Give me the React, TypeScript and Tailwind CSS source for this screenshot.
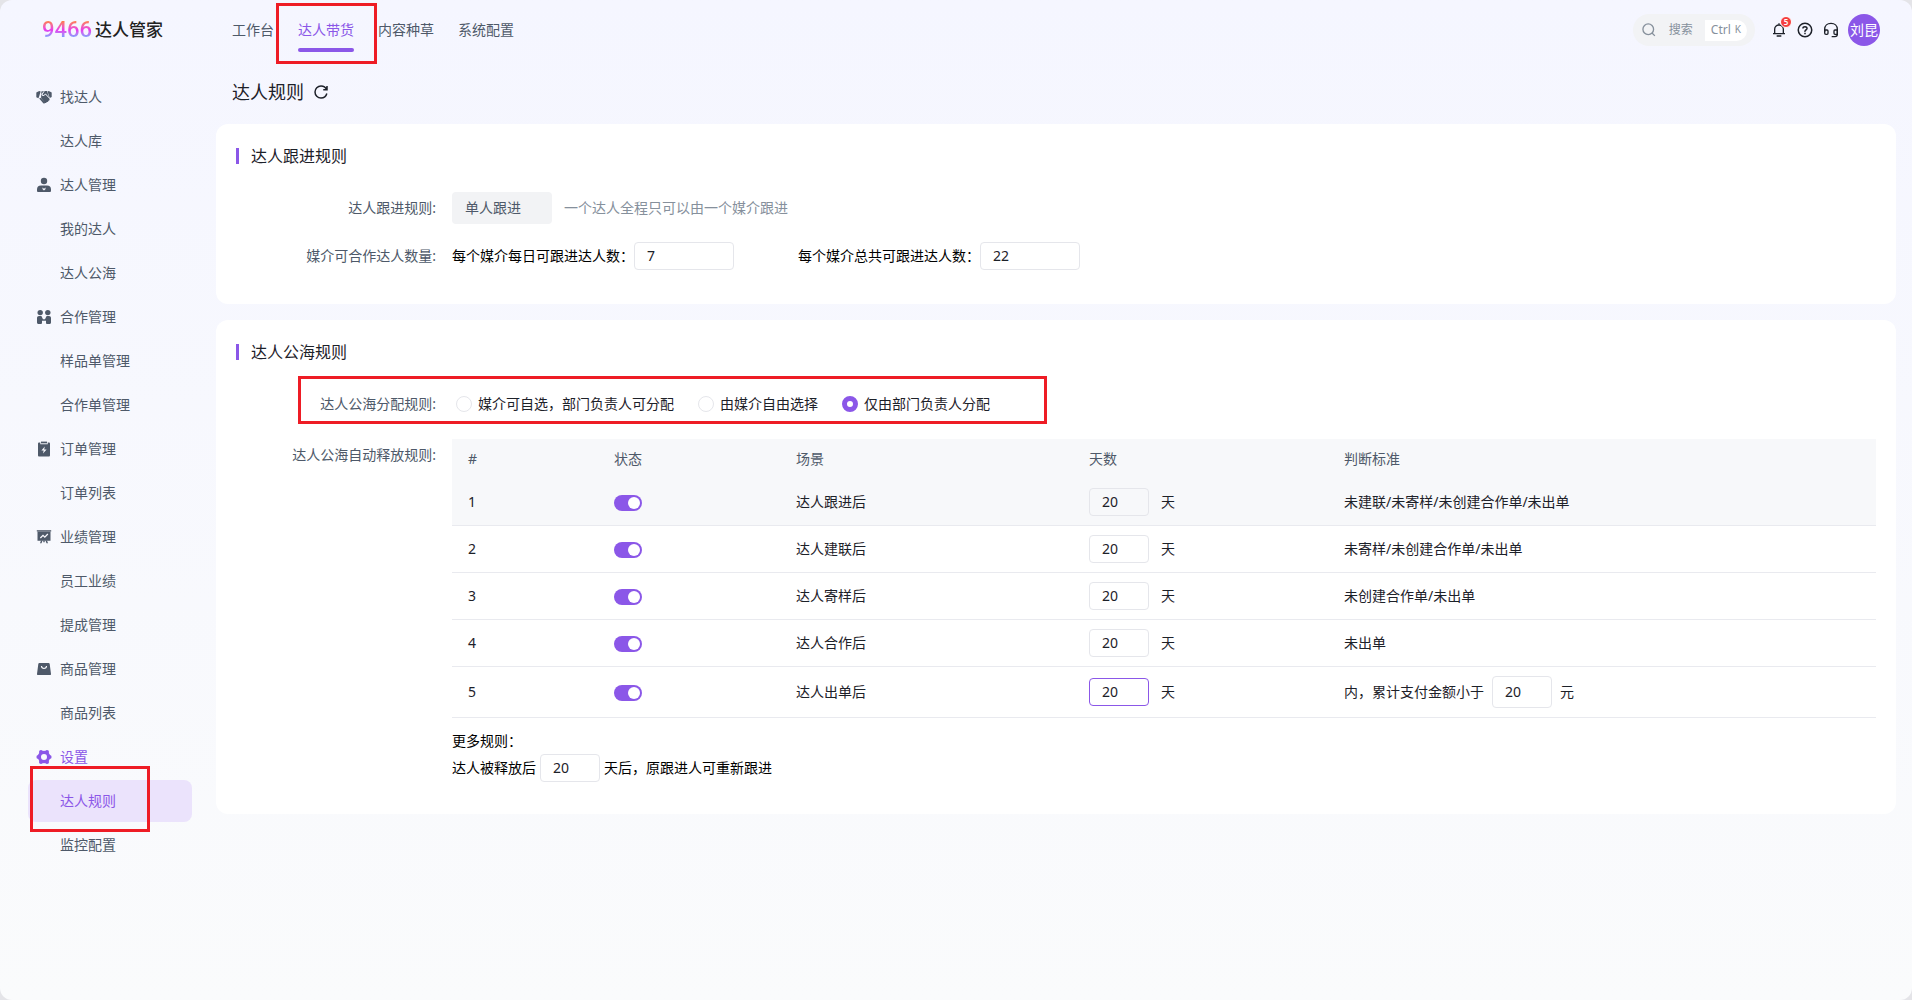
import { useState, type ReactNode } from 'react'
import clsx from 'clsx'

function StrokeIcon({ size, width = 4, children }: { size: number; width?: number; children: ReactNode }) {
  return (
    <svg width={size} height={size} viewBox="0 0 48 48" fill="none" stroke="currentColor" strokeWidth={width} aria-hidden="true">
      {children}
    </svg>
  )
}

function SolidIcon({ children }: { children: ReactNode }) {
  return (
    <svg width="16" height="16" viewBox="0 0 16 16" fill="currentColor" aria-hidden="true">
      {children}
    </svg>
  )
}

const HandshakeIcon = () => (
  <SolidIcon>
    <path d="M.3 3.400 3.200 1.900l1.500.7L2.500 9.300.3 8.200Z" />
    <path d="M15.700 3.400 12.800 1.900l-1.300.6 2.300 6.500 1.900-.9Z" />
    <path d="M5.300 2.500 8 2.100 5.900 4.500c-.6.8-.3 1.800.5 2.200.8.400 1.700.2 2.300-.5l.7-.7 3.900 4.100c.5.6.4 1.400-.1 1.800-.2.200-.5.300-.8.300 0 .9-.7 1.500-1.600 1.400-.2.800-1 1.200-1.700.9L5.100 9.300Z" />
    <path d="M8.700 2.100h2.300l2.100 6.100-3.300-3.400c-.3-.2-.6-.1-.8.1L7.700 5.900c-.4.300-.9.100-1-.2-.1-.2 0-.4.100-.6Z" />
    <path d="M3.200 9.600 4.400 8.700l5 5.100c-.5.700-1.400.9-2.100.4Z" />
  </SolidIcon>
)

const UserIcon = () => (
  <SolidIcon>
    <circle cx="8" cy="4" r="3.200" />
    <path fillRule="evenodd" d="M5 8.400h6a4 4 0 0 1 4 4v1.600a1 1 0 0 1-1 1H2a1 1 0 0 1-1-1v-1.600a4 4 0 0 1 4-4Zm1.400 2 .2 1.800L8 13.600l1.400-1.400.2-1.800L8 11.800Z" />
  </SolidIcon>
)

const TeamIcon = () => (
  <SolidIcon>
    <circle cx="4.200" cy="3.600" r="2.700" />
    <circle cx="11.800" cy="3.600" r="2.700" />
    <path d="M3 7h2.400L7 10.200h2L10.600 7H13c1.200 0 2 .8 2 2v4.500c0 .9-.6 1.500-1.500 1.500h-2.200c-.8 0-1.300-.5-1.300-1.300v-1.900H6v1.900c0 .8-.5 1.300-1.300 1.300H2.500C1.600 15 1 14.400 1 13.500V9c0-1.200.8-2 2-2Z" />
  </SolidIcon>
)

const OrderIcon = () => (
  <SolidIcon>
    <path d="M5 .6h6v1.700H5z" />
    <path fillRule="evenodd" d="M3.300 1.500h1v1.800h7.400V1.500h1c.8 0 1.300.5 1.300 1.300v11.400c0 .8-.5 1.300-1.300 1.300H3.300c-.8 0-1.300-.5-1.300-1.300V2.800c0-.8.500-1.300 1.300-1.300ZM8.800 5.600 5.400 9.500h2.300l-.7 3.100 3.600-4.100H8.200l.6-2.900Z" />
  </SolidIcon>
)

const BoardIcon = () => (
  <SolidIcon>
    <path d="M.8 1.200h14.400v1.300H.8z" />
    <path fillRule="evenodd" d="M1.500 2.500h13v9.300h-13Zm2.400 5.900.9 1 2.200-2.100L8.800 9l3.500-3.500-.9-.9-2.600 2.600L7 5.500Z" />
    <path d="m5 11.500-1 2.700h1.500l1-2.700Zm6 0 1 2.700h-1.500l-1-2.700ZM7.300 11.500h1.400v1.700H7.300Z" />
  </SolidIcon>
)

const BagIcon = () => (
  <SolidIcon>
    <path fillRule="evenodd" d="M3.400 2h9.200c.6 0 1 .4 1.100 1L15 13c.1.600-.4 1.100-1 1.100H2c-.6 0-1.100-.5-1-1.100L2.300 3c.1-.6.500-1 1.100-1Zm1.500 3c0 1.900 1.300 3 3.100 3s3.100-1.100 3.100-3H9.900c0 1.200-.7 1.800-1.900 1.800S6.100 6.200 6.100 5Z" />
  </SolidIcon>
)

const GearIcon = () => (
  <svg width="16" height="16" viewBox="0 0 16 16" aria-hidden="true">
    <circle cx="8" cy="8" r="4.600" fill="none" stroke="currentColor" strokeWidth="3.200" />
    <g fill="currentColor">
      <circle cx="5" cy="2.900" r="2" />
      <circle cx="11" cy="2.900" r="2" />
      <circle cx="2.400" cy="8" r="2" />
      <circle cx="13.600" cy="8" r="2" />
      <circle cx="5" cy="13.100" r="2" />
      <circle cx="11" cy="13.100" r="2" />
    </g>
  </svg>
)

const topNav = ['工作台', '达人带货', '内容种草', '系统配置']

const menu: { label: string; icon?: ReactNode }[] = [
  { label: '找达人', icon: <HandshakeIcon /> },
  { label: '达人库' },
  { label: '达人管理', icon: <UserIcon /> },
  { label: '我的达人' },
  { label: '达人公海' },
  { label: '合作管理', icon: <TeamIcon /> },
  { label: '样品单管理' },
  { label: '合作单管理' },
  { label: '订单管理', icon: <OrderIcon /> },
  { label: '订单列表' },
  { label: '业绩管理', icon: <BoardIcon /> },
  { label: '员工业绩' },
  { label: '提成管理' },
  { label: '商品管理', icon: <BagIcon /> },
  { label: '商品列表' },
  { label: '设置', icon: <GearIcon /> },
  { label: '达人规则' },
  { label: '监控配置' },
]

const assignOptions = ['媒介可自选，部门负责人可分配', '由媒介自由选择', '仅由部门负责人分配']

const releaseRules = [
  { scene: '达人跟进后', rule: '未建联/未寄样/未创建合作单/未出单' },
  { scene: '达人建联后', rule: '未寄样/未创建合作单/未出单' },
  { scene: '达人寄样后', rule: '未创建合作单/未出单' },
  { scene: '达人合作后', rule: '未出单' },
  { scene: '达人出单后', rule: '' },
]

function Field({ id, value, className, label }: { id?: string; value: string; className?: string; label?: string }) {
  return (
    <input
      id={id}
      type="text"
      defaultValue={value}
      aria-label={label}
      className={clsx('rounded border bg-transparent px-3 pb-0.5 text-[#1d2129] outline-none', className)}
    />
  )
}

function Switch({ label }: { label: string }) {
  const [on, setOn] = useState(true)
  return (
    <button
      type="button"
      role="switch"
      aria-checked={on}
      aria-label={label}
      onClick={() => setOn(!on)}
      className={clsx('flex h-4 w-7 items-center rounded-full px-0.5', on ? 'justify-end bg-[#8b57e8]' : 'bg-[#c9cdd4]')}
    >
      <span className="size-3 rounded-full bg-white" />
    </button>
  )
}

function CardTitle({ children }: { children: ReactNode }) {
  return (
    <h2 className="flex h-6 items-center gap-3 text-base text-[#1d2129]">
      <span className="h-4 w-[3px] bg-[#8b57e8]" />
      {children}
    </h2>
  )
}

function Header() {
  return (
    <header className="flex h-[60px] items-center pr-8">
      <a href="#" className="flex w-[232px] shrink-0 items-center gap-[3px] pl-[42px] leading-6">
        <span className="bg-linear-to-b from-[#ff7a50] from-15% via-[#e835ee] via-50% to-[#4fa6ff] to-85% bg-clip-text font-[Roboto,sans-serif] text-[22px] font-medium text-transparent">
          9466
        </span>
        <span className="text-[17px] font-medium text-[#222]">达人管家</span>
      </a>
      <nav className="flex h-full gap-6">
        {topNav.map((item) => {
          const active = item === '达人带货'
          return (
            <a key={item} href="#" className={clsx('relative flex items-center', active ? 'text-[#8b57e8]' : 'text-[#4e5969]')}>
              {item}
              {active && (
                <>
                  <span className="absolute inset-x-0 top-12 h-1 rounded-full bg-[#8b57e8]" />
                  <span className="pointer-events-none absolute top-[3px] -right-[23px] -bottom-1 -left-[22px] border-3 border-[#ee1c25]" />
                </>
              )}
            </a>
          )
        })}
      </nav>
      <div className="ml-auto flex items-center">
        <button type="button" className="flex h-8 items-center rounded-full bg-[#f2f3f5] px-2 text-xs text-[#86909c]">
          <StrokeIcon size={16}>
            <path d="M33.072 33.071c6.248-6.248 6.248-16.379 0-22.627-6.249-6.249-16.380-6.249-22.628 0-6.248 6.248-6.248 16.379 0 22.627 6.248 6.248 16.380 6.248 22.628 0Zm0 0 8.485 8.485" />
          </StrokeIcon>
          <span className="ml-3">搜索</span>
          <span className="ml-3 flex h-[21px] items-center gap-1 rounded-l rounded-r-full bg-white px-[6px]">
            Ctrl <span className="text-[10px]">K</span>
          </span>
        </button>
        <div className="ml-4 flex items-center gap-[9px] text-[#1d2129]">
          <button type="button" aria-label="通知" className="relative">
            <StrokeIcon size={16}>
              <path d="M24 9c7.180 0 13 5.820 13 13v13H11V22c0-7.180 5.820-13 13-13Zm0 0V4M6 35h36m-25 7h14" />
            </StrokeIcon>
            <span className="absolute -top-[6px] left-[9px] flex size-3 items-center justify-center rounded-full border border-white bg-[#f53f3f] text-[8px] leading-none font-semibold text-white">
              5
            </span>
          </button>
          <button type="button" aria-label="帮助">
            <StrokeIcon size={18}>
              <circle cx="24" cy="24" r="18" />
              <path d="M24.006 31v4.008m0-6.008L24 28c0-3 3-4 4.780-6.402C30.558 19.195 28.288 15 23.987 15c-4.014 0-5.382 2.548-5.388 4.514v.465" />
            </StrokeIcon>
          </button>
          <button type="button" aria-label="客服">
            <StrokeIcon size={16}>
              <path d="M5 30V22C5 11 13 4 24 4s19 7 19 18v15c0 4-3 7-7 7H26" />
              <path d="M5 24h7a3 3 0 0 1 3 3v7a3 3 0 0 1-3 3H9c-2.500 0-4-2-4-4Zm38 0h-7a3 3 0 0 0-3 3v7a3 3 0 0 0 3 3h7Z" />
            </StrokeIcon>
          </button>
          <button type="button" className="flex size-8 items-center justify-center rounded-full bg-[#8b57e8] text-sm text-white">
            刘昆
          </button>
        </div>
      </div>
    </header>
  )
}

function Sidebar() {
  return (
    <aside className="flex w-[216px] shrink-0 flex-col gap-0.5 pt-4 pr-6 pl-7 text-[#4e5969]">
      {menu.map(({ label, icon }) => (
        <a
          key={label}
          href="#"
          className={clsx(
            'relative flex h-[42px] items-center rounded-lg pl-2',
            label === '设置' && 'text-[#8b57e8]',
            label === '达人规则' && 'bg-[#ebe3fc] text-[#8b57e8]',
          )}
        >
          <span className="flex w-6 items-center">{icon}</span>
          {label}
          {label === '达人规则' && (
            <span className="pointer-events-none absolute -top-[14px] right-[42px] -bottom-[10px] left-0.5 z-10 border-3 border-[#ee1c25]" />
          )}
        </a>
      ))}
    </aside>
  )
}

function FollowRules() {
  return (
    <section className="rounded-xl bg-white px-5 pt-5 pb-[34px]">
      <CardTitle>达人跟进规则</CardTitle>
      <div className="mt-6 flex items-center">
        <label htmlFor="follow" className="w-[216px] shrink-0 pr-4 text-right text-[#4e5969]">
          达人跟进规则:
        </label>
        <select
          id="follow"
          disabled
          className="h-8 w-[100px] appearance-none rounded bg-[#f2f3f5] px-[13px] text-[#4e5969] opacity-100"
        >
          <option>单人跟进</option>
        </select>
        <span className="ml-3 text-[#86909c]">一个达人全程只可以由一个媒介跟进</span>
      </div>
      <div className="mt-[18px] flex items-center text-black">
        <span className="w-[216px] shrink-0 pr-4 text-right text-[#4e5969]">媒介可合作达人数量:</span>
        <label htmlFor="daily">每个媒介每日可跟进达人数：</label>
        <Field id="daily" value="7" className="h-7 w-[100px] border-[#e5e6eb]" />
        <label htmlFor="total" className="ml-16">
          每个媒介总共可跟进达人数：
        </label>
        <Field id="total" value="22" className="h-7 w-[100px] border-[#e5e6eb]" />
      </div>
    </section>
  )
}

function PoolRules() {
  return (
    <section className="rounded-xl bg-white px-5 pt-5 pb-8">
      <CardTitle>达人公海规则</CardTitle>
      <div role="radiogroup" aria-label="达人公海分配规则" className="relative mt-[29px] flex h-[22px] items-center">
        <span className="w-[216px] shrink-0 pr-4 text-right text-[#4e5969]">达人公海分配规则:</span>
        <div className="flex gap-6 pl-1 text-[#1d2129]">
          {assignOptions.map((option) => (
            <label key={option} className="flex items-center gap-[6px]">
              <input
                type="radio"
                name="assign"
                defaultChecked={option === '仅由部门负责人分配'}
                className="size-4 appearance-none rounded-full border border-[#e5e6eb] bg-white checked:border-5 checked:border-[#8b57e8]"
              />
              {option}
            </label>
          ))}
        </div>
        <div className="pointer-events-none absolute -top-[17px] -bottom-[9px] left-[62px] w-[749px] border-3 border-[#ee1c25]" />
      </div>
      <div className="mt-6 flex">
        <span className="w-[216px] shrink-0 pt-[5px] pr-4 text-right text-[#4e5969]">达人公海自动释放规则:</span>
        <div className="min-w-0 flex-1">
          <table className="w-full table-fixed text-left text-[#1d2129]">
            <thead>
              <tr className="h-10 bg-[#f7f8fa] text-[#4e5969]">
                <th className="w-[146px] px-4 font-normal">#</th>
                <th className="w-[182px] px-4 font-normal">状态</th>
                <th className="w-[293px] px-4 font-normal">场景</th>
                <th className="w-[255px] px-4 font-normal">天数</th>
                <th className="px-4 font-normal">判断标准</th>
              </tr>
            </thead>
            <tbody>
              {releaseRules.map(({ scene, rule }, i) => (
                <tr key={scene} className={clsx('border-b border-[#e9eaef]', i === 0 && 'bg-[#f7f8fa]')}>
                  <td className="px-4">{i + 1}</td>
                  <td className="px-4 pt-0.5">
                    <Switch label={scene} />
                  </td>
                  <td className="px-4">{scene}</td>
                  <td className="px-4 py-[9px]">
                    <div className="flex items-center gap-3">
                      <Field
                        value="20"
                        label={`${scene}天数`}
                        className={clsx('h-7 w-[60px]', i === 4 ? 'border-[#8b57e8]' : 'border-[#e5e6eb]')}
                      />
                      天
                    </div>
                  </td>
                  <td className="px-4 py-[9px]">
                    {rule || (
                      <label className="flex items-center gap-2">
                        内，累计支付金额小于
                        <Field value="20" className="h-8 w-[60px] border-[#e5e6eb]" />元
                      </label>
                    )}
                  </td>
                </tr>
              ))}
            </tbody>
          </table>
          <div className="mt-3 text-black">
            <p>更多规则：</p>
            <label className="mt-0.5 flex items-center gap-1">
              达人被释放后
              <Field value="20" className="h-7 w-[60px] border-[#e5e6eb]" />
              天后，原跟进人可重新跟进
            </label>
          </div>
        </div>
      </div>
    </section>
  )
}

export default function App() {
  return (
    <div className="bg-[#e4e4e8]">
      <div className="min-h-screen rounded-xl bg-linear-to-b from-[#f5f6ff] to-[#fafbfc] font-['Noto_Sans','Noto_Sans_CJK_SC',sans-serif] text-sm leading-[22px]">
        <Header />
        <div className="flex">
          <Sidebar />
          <main className="min-w-0 flex-1 pr-4">
            <div className="flex h-16 items-center gap-2 pl-4 text-[#1d2129]">
              <h1 className="text-lg">达人规则</h1>
              <button type="button" aria-label="刷新">
                <StrokeIcon size={18}>
                  <path d="M38.837 18C36.463 12.136 30.715 8 24 8 15.163 8 8 15.163 8 24s7.163 16 16 16c7.455 0 13.720-5.100 15.496-12M40 8v10H30" />
                </StrokeIcon>
              </button>
            </div>
            <div className="space-y-4">
              <FollowRules />
              <PoolRules />
            </div>
          </main>
        </div>
      </div>
    </div>
  )
}
